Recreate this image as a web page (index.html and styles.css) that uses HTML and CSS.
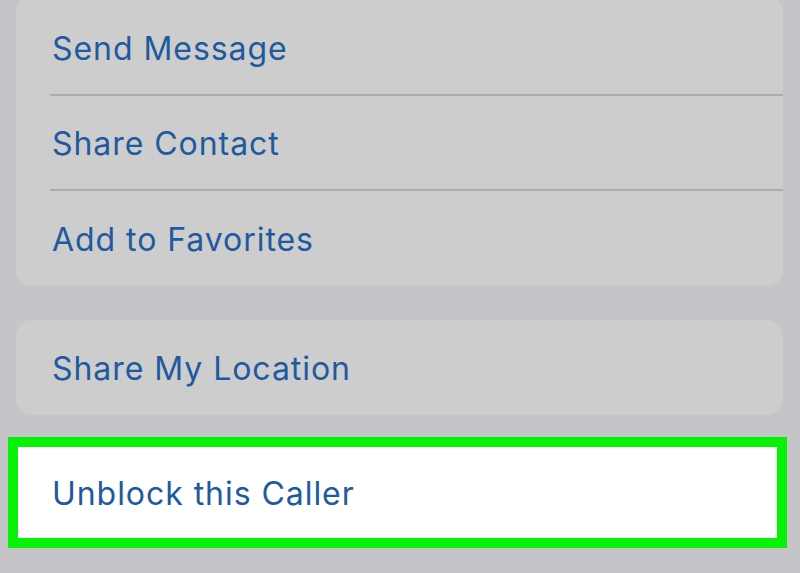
FILE: index.html
```html
<!DOCTYPE html>
<html>
<head>
<meta charset="utf-8">
<link rel="stylesheet" href="styles.css">
</head>
<body>
<div class="screen">
  <div class="card card-top">
    <div class="row"><span class="label">Send Message</span></div>
    <div class="sep"></div>
    <div class="row"><span class="label">Share Contact</span></div>
    <div class="sep"></div>
    <div class="row row-last"><span class="label">Add to Favorites</span></div>
  </div>
  <div class="card card-mid">
    <div class="row"><span class="label">Share My Location</span></div>
  </div>
  <div class="highlight">
    <div class="row row-hl"><span class="label">Unblock this Caller</span></div>
  </div>
</div>
</body>
</html>
```
FILE: styles.css
```css
html, body {
  margin: 0;
  padding: 0;
  background: #c5c5c9;
}
.screen {
  width: 800px;
  height: 573px;
  overflow: hidden;
  display: flex;
  flex-direction: column;
  font-family: Inter, "Liberation Sans", sans-serif;
}
.card {
  background: #cdcdcd;
  border-radius: 16px;
  margin: 0 17px 0 16px;
  display: flex;
  flex-direction: column;
}
.card-top {
  margin-top: -4px;
  padding-top: 4px;
}
.card-mid {
  margin-top: 34px;
}
.row {
  height: 95px;
  display: flex;
  align-items: center;
  padding-left: 36px;
  box-sizing: border-box;
}
.row-last {
  height: 96px;
}
.label {
  font-size: 32px;
  color: #1e5a9f;
  letter-spacing: 0.95px;
  padding-top: 2px;
}
.sep {
  height: 2px;
  margin-left: 34px;
  background: #adadad;
  margin-top: -1px;
  margin-bottom: -1px;
}
.highlight {
  margin: 22px 13px 0 8px;
  border: 10px solid #08f208;
  background: #ffffff;
}
.highlight .row-hl {
  height: 91px;
  padding-left: 34px;
}
```
